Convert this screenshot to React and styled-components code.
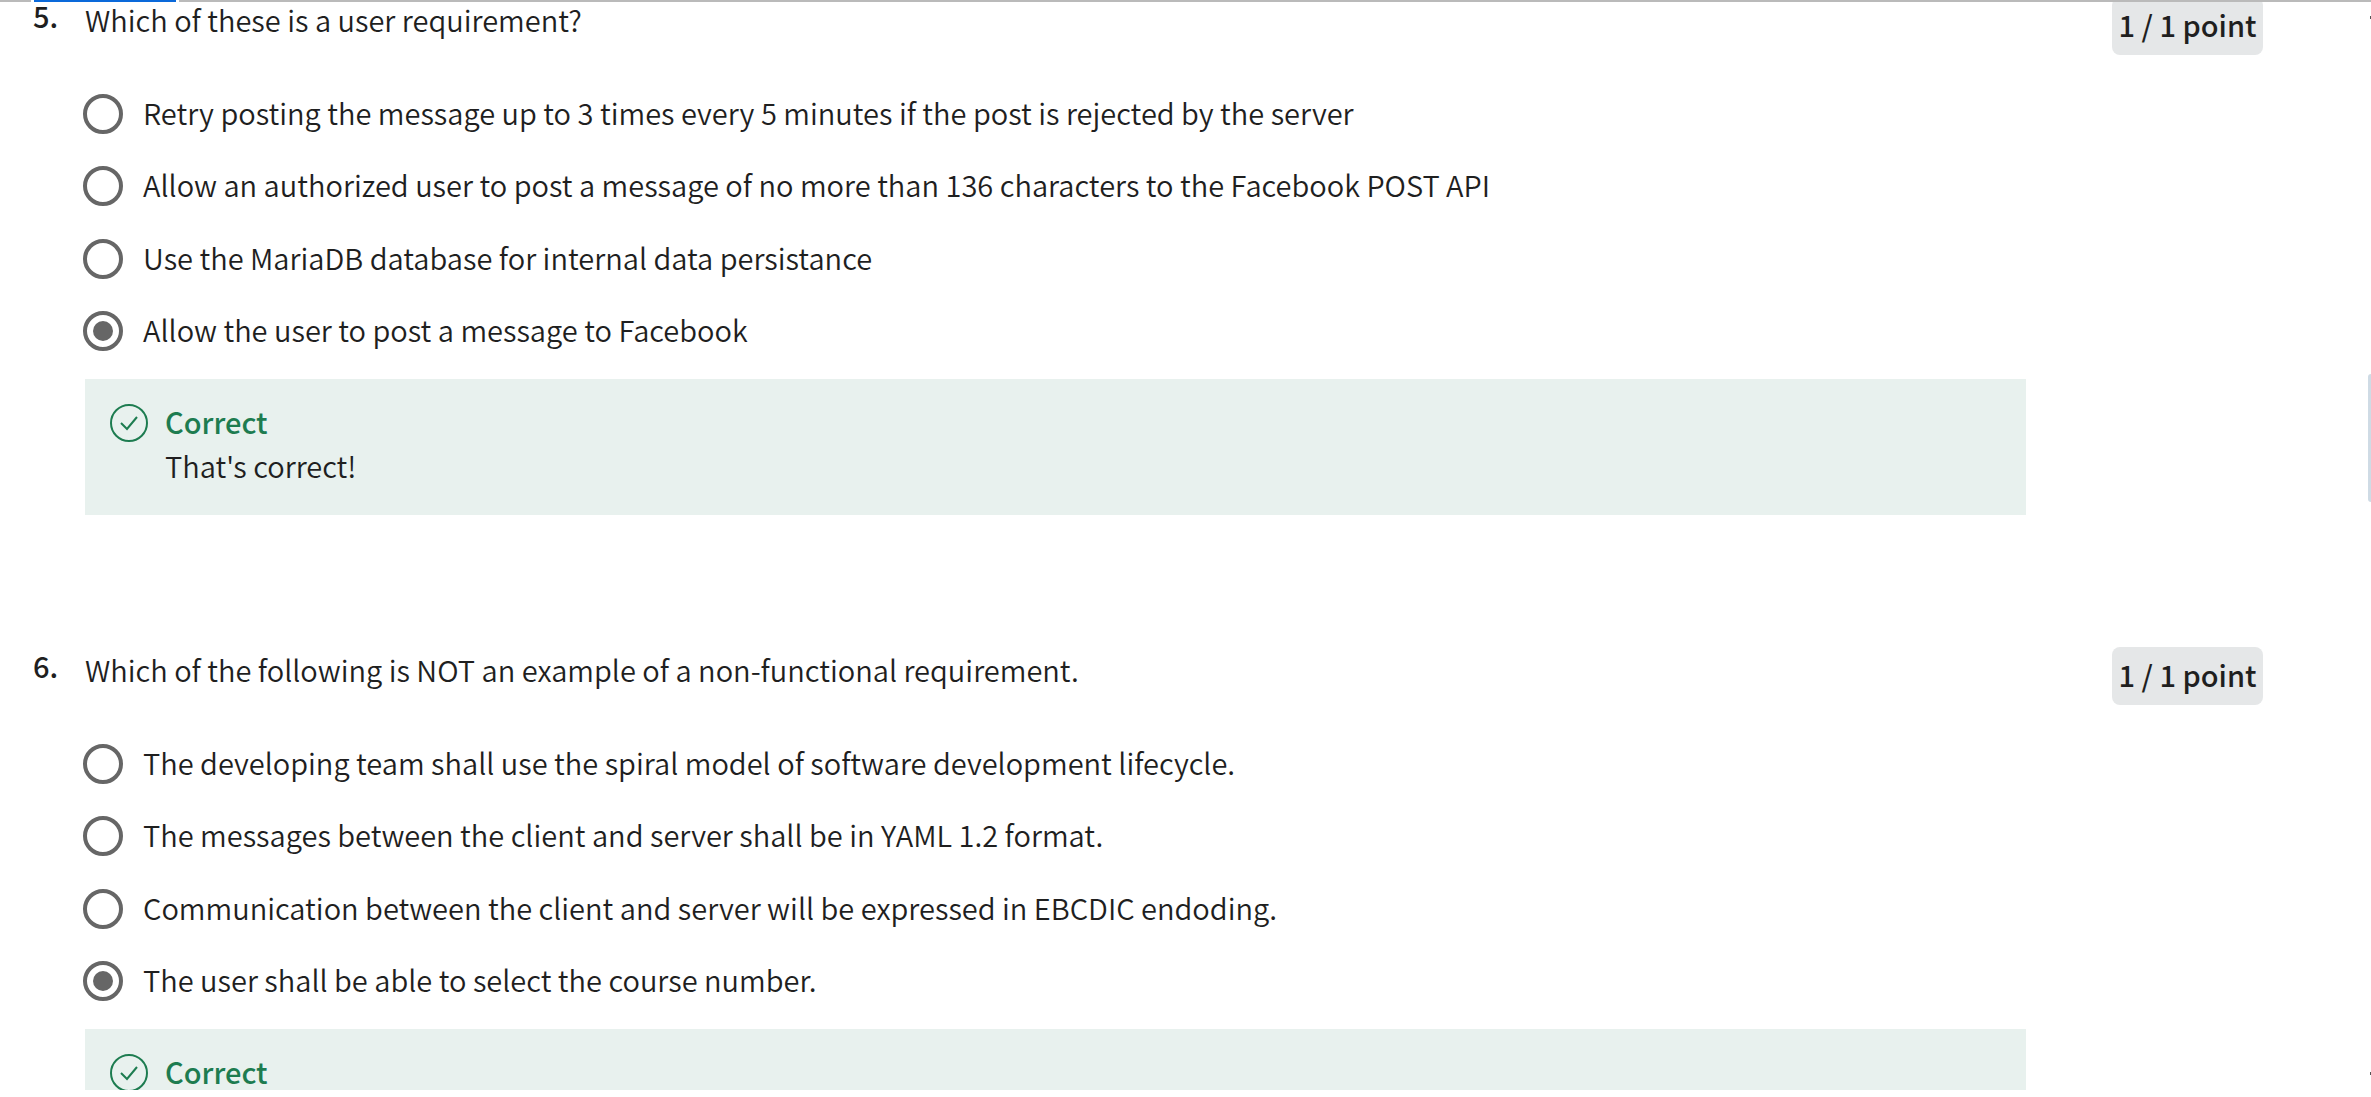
import React from "react";
import styled, { createGlobalStyle } from "styled-components";

const GlobalStyle = createGlobalStyle`
  * { box-sizing: border-box; }
  body {
    margin: 0;
    background: #fff;
    color: #1f1f1f;
    font-family: "Noto Sans CJK SC", "Noto Sans", sans-serif;
    font-size: 29px;
    font-weight: 350;
    line-height: 44px;
  }
`;

const Page = styled.div`
  position: relative;
  display: flow-root;
  height: calc(100vh - 7px);
  overflow: hidden;
`;

const TopRule = styled.div`
  position: absolute;
  inset: 0 0 auto 0;
  height: 2px;
  background: #bababa;
`;

const ActiveTab = styled.div`
  width: 148px;
  height: 2px;
  margin-left: 31px;
  border: solid #fff;
  border-width: 0 3px;
  background: #0a69da;
`;

const SidePanel = styled.aside`
  position: absolute;
  top: 374px;
  right: 0;
  width: 3px;
  height: 128px;
  border-radius: 3px 0 0 3px;
  background: #cfdbe5;
`;

const EdgeMark = styled.i`
  position: absolute;
  top: ${(p) => p.$top}px;
  right: 0;
  width: 1px;
  height: 3px;
  background: #555;
`;

const Quiz = styled.main`
  display: flex;
  flex-direction: column;
  gap: 132px;
  margin-top: -3px;
  padding: 0 108px 0 33px;
`;

const Question = styled.section`
  display: grid;
  grid-template-columns: 52px minmax(0, 1fr) 151px;
  align-items: start;
`;

const Number = styled.span`
  line-height: 36px;
  font-weight: 500;
`;

const Body = styled.div`
  padding-right: 86px;
`;

const Prompt = styled.h2`
  margin: 0;
  font-size: 29px;
  font-weight: 350;
`;

const Points = styled.div`
  padding-bottom: 4px;
  border-radius: 8px;
  background: #e5e7e8;
  line-height: 54px;
  font-weight: 500;
  text-align: center;
  white-space: nowrap;
`;

const Options = styled.div`
  display: flex;
  flex-direction: column;
  justify-content: space-between;
  min-height: 257px;
  margin: 53px 0 28px -2px;
`;

const Option = styled.label`
  display: flex;
  gap: 20px;
  height: 40px;
  line-height: 36px;
`;

const Radio = styled.input`
  appearance: none;
  flex: none;
  width: 40px;
  height: 40px;
  margin: 0;
  border: 4px solid #666;
  border-radius: 50%;
  background: #fff;

  &:checked {
    padding: 6px;
    background: #666 content-box;
  }
`;

const Feedback = styled.div`
  display: flex;
  gap: 17px;
  padding: 20px 25px 28px;
  background: #e8f1ee;
`;

const CheckIcon = styled.svg`
  flex: none;
  width: 38px;
  height: 38px;
  margin-top: 5px;
  fill: none;
  stroke: #1d7c50;
  stroke-width: 2;
`;

const Verdict = styled.strong`
  display: block;
  color: #1d7c50;
  font-weight: 500;
`;

const Note = styled.p`
  margin: 0;
`;

const questions = [
  {
    number: 5,
    prompt: "Which of these is a user requirement?",
    options: [
      "Retry posting the message up to 3 times every 5 minutes if the post is rejected by the server",
      "Allow an authorized user to post a message of no more than 136 characters to the Facebook POST API",
      "Use the MariaDB database for internal data persistance",
      "Allow the user to post a message to Facebook",
    ],
    selected: 3,
    note: "That's correct!",
  },
  {
    number: 6,
    prompt: "Which of the following is NOT an example of a non-functional requirement.",
    options: [
      "The developing team shall use the spiral model of software development lifecycle.",
      "The messages between the client and server shall be in YAML 1.2 format.",
      "Communication between the client and server will be expressed in EBCDIC endoding.",
      "The user shall be able to select the course number.",
    ],
    selected: 3,
  },
];

function QuestionBlock({ number, prompt, options, selected, note }) {
  return (
    <Question>
      <Number>{number}.</Number>
      <Body>
        <Prompt>{prompt}</Prompt>
        <Options role="radiogroup" aria-label={prompt}>
          {options.map((text, i) => (
            <Option key={text}>
              <Radio type="radio" name={`question-${number}`} defaultChecked={i === selected} />
              <span>{text}</span>
            </Option>
          ))}
        </Options>
        <Feedback>
          <CheckIcon viewBox="0 0 38 38" aria-hidden="true">
            <circle cx="19" cy="19" r="18" />
            <path d="M11 19l6 6L27 13" />
          </CheckIcon>
          <div>
            <Verdict>Correct</Verdict>
            {note && <Note>{note}</Note>}
          </div>
        </Feedback>
      </Body>
      <Points>1 / 1 point</Points>
    </Question>
  );
}

export default function App() {
  return (
    <Page>
      <GlobalStyle />
      <Quiz>
        {questions.map((q) => (
          <QuestionBlock key={q.number} {...q} />
        ))}
      </Quiz>
      <TopRule>
        <ActiveTab />
      </TopRule>
      <SidePanel />
      <EdgeMark $top={16} />
      <EdgeMark $top={1072} />
    </Page>
  );
}
